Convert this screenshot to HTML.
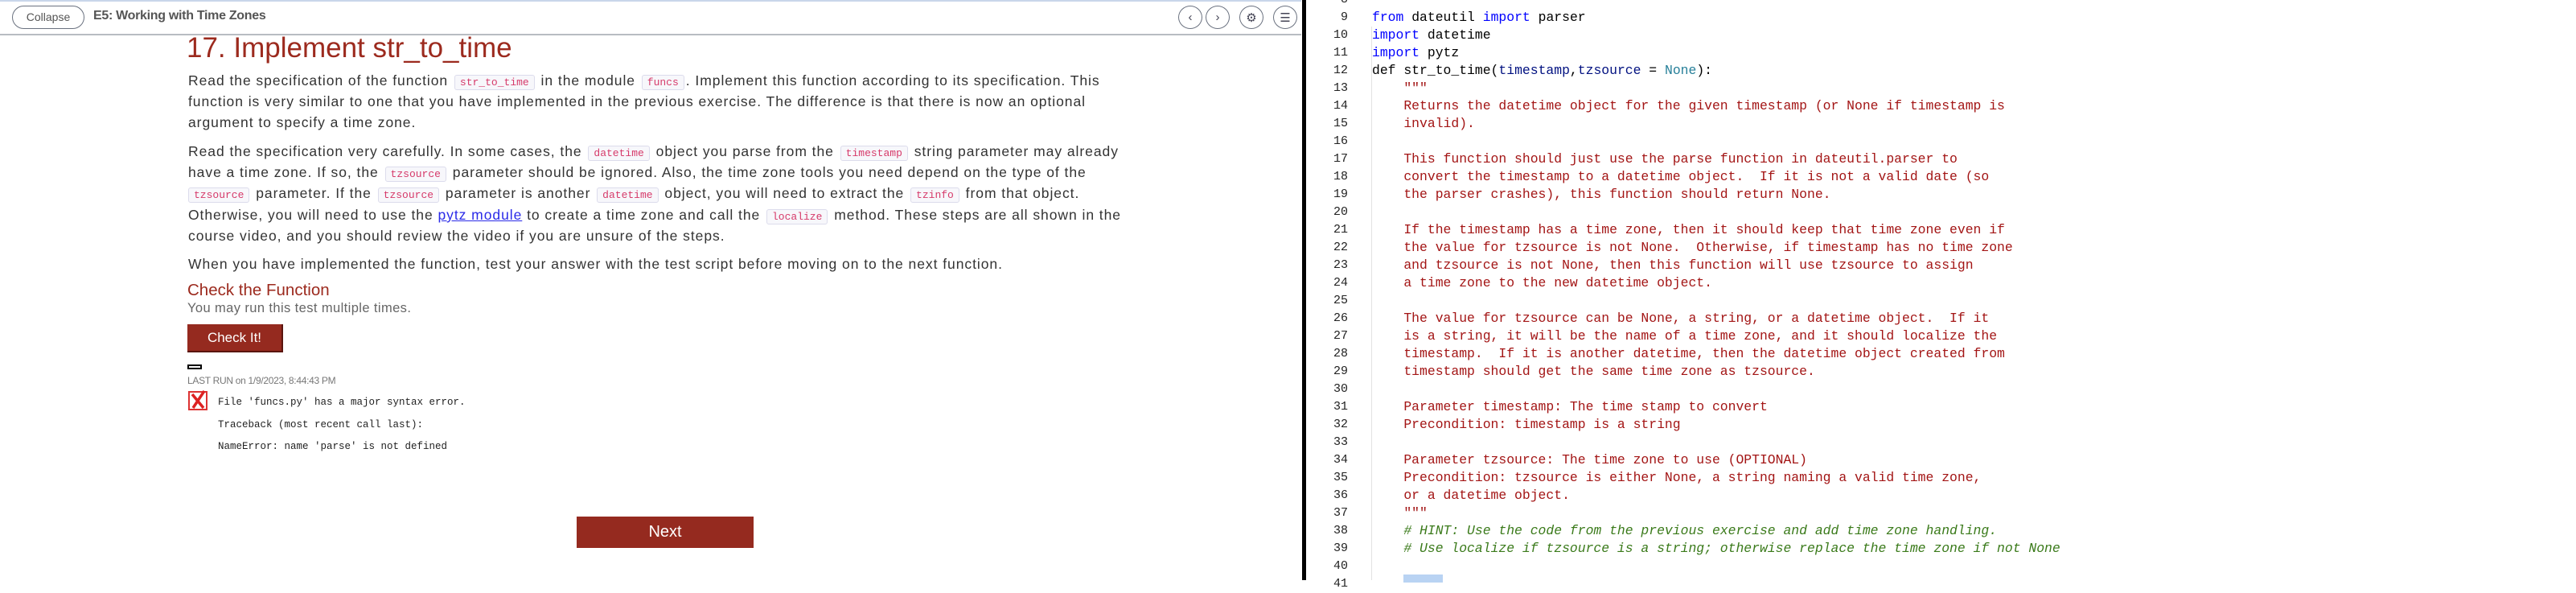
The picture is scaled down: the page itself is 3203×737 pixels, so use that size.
<!DOCTYPE html>
<html><head><meta charset="utf-8"><style>
*{margin:0;padding:0;box-sizing:border-box}
body{width:3203px;height:721px;overflow:hidden;background:#fff;position:relative;font-family:"Liberation Sans",sans-serif;color:#333}
.a{position:absolute;white-space:nowrap}
.p{font-size:17.5px;letter-spacing:0.95px;color:#333;line-height:26px}
code{font-family:"Liberation Mono",monospace;font-size:13px;letter-spacing:0;color:#d63a6a;background:#f7f7fb;border:1px solid #dcdcec;border-radius:3px;padding:1px 6px;margin:0 2px}
.circ{position:absolute;top:7px;width:30px;height:29px;border:1.5px solid #6b7280;border-radius:50%;display:flex;align-items:center;justify-content:center;color:#445;font-size:15px}
.ln{position:absolute;left:1630px;width:46px;text-align:right;font-family:"Liberation Mono",monospace;font-size:15px;color:#222;height:22px;line-height:22px}
.cd{position:absolute;left:1706px;font-family:"Liberation Mono",monospace;font-size:16.4px;height:22px;line-height:22px;white-space:pre;color:#000}
.s{color:#a31515}.k{color:#0000ff}.v{color:#001080}.n{color:#267f99}.c{color:#3a7a1a;font-style:italic}
</style></head><body>
<div class="a" style="left:0;top:0;width:1618px;height:2px;background:#c9d6ea"></div>
<div class="a" style="left:0;top:42px;width:1618px;height:2px;background:#b8bcc2"></div>
<div class="a" style="left:15px;top:7px;width:90px;height:29px;border:1.5px solid #6b7280;border-radius:15px;font-size:14px;color:#555;text-align:center;line-height:26px">Collapse</div>
<div class="a" style="left:116px;top:11px;font-size:16px;font-weight:bold;color:#555;letter-spacing:-0.3px">E5: Working with Time Zones</div>
<div class="circ" style="left:1465px">&#8249;</div>
<div class="circ" style="left:1499px">&#8250;</div>
<div class="circ" style="left:1541px">&#9881;</div>
<div class="circ" style="left:1583px">&#9776;</div>
<div class="a" style="left:1619px;top:0;width:5px;height:721px;background:#000"></div>

<div class="a" style="left:232px;top:42px;font-size:35px;color:#9c2a1e;line-height:36px">17. Implement str_to_time</div>
<div class="a p" style="left:234px;top:87px">Read the specification of the function <code>str_to_time</code> in the module <code>funcs</code>. Implement this function according to its specification. This</div>
<div class="a p" style="left:234px;top:113px">function is very similar to one that you have implemented in the previous exercise. The difference is that there is now an optional</div>
<div class="a p" style="left:234px;top:139px">argument to specify a time zone.</div>
<div class="a p" style="left:234px;top:175px">Read the specification very carefully. In some cases, the <code>datetime</code> object you parse from the <code>timestamp</code> string parameter may already</div>
<div class="a p" style="left:234px;top:201px">have a time zone. If so, the <code>tzsource</code> parameter should be ignored. Also, the time zone tools you need depend on the type of the</div>
<div class="a p" style="left:234px;top:227px"><code style="margin-left:0">tzsource</code> parameter. If the <code>tzsource</code> parameter is another <code>datetime</code> object, you will need to extract the <code>tzinfo</code> from that object.</div>
<div class="a p" style="left:234px;top:254px">Otherwise, you will need to use the <span style="color:#2a2ae8;text-decoration:underline">pytz module</span> to create a time zone and call the <code>localize</code> method. These steps are all shown in the</div>
<div class="a p" style="left:234px;top:280px">course video, and you should review the video if you are unsure of the steps.</div>
<div class="a p" style="left:234px;top:315px">When you have implemented the function, test your answer with the test script before moving on to the next function.</div>
<div class="a" style="left:233px;top:349px;font-size:20.5px;color:#9c2a1e">Check the Function</div>
<div class="a" style="left:233px;top:374px;font-size:16.5px;letter-spacing:0.4px;color:#666">You may run this test multiple times.</div>
<div class="a" style="left:233px;top:403px;width:119px;height:35px;background:#952a1f;border-right:2px solid #5a150f;border-bottom:2px solid #5a150f;color:#fff;font-size:17px;text-align:center;line-height:33px">Check It!</div>
<div class="a" style="left:233px;top:453px;width:18px;height:6px;border:2px solid #000;background:#fff"></div>
<div class="a" style="left:233px;top:466px;font-size:12px;color:#777;letter-spacing:-0.3px">LAST RUN on 1/9/2023, 8:44:43 PM</div>
<svg class="a" style="left:234px;top:484px" width="28" height="26" viewBox="0 0 28 26"><rect x="1" y="3" width="22" height="22" fill="#fff" stroke="#d33" stroke-width="2"/><path d="M5 6 L19 23 M20 2 L6 23" stroke="#d22" stroke-width="3.5"/></svg>
<div class="a" style="left:271px;top:493px;font-family:'Liberation Mono',monospace;font-size:12.5px;color:#222">File 'funcs.py' has a major syntax error.</div>
<div class="a" style="left:271px;top:521px;font-family:'Liberation Mono',monospace;font-size:12.5px;color:#222">Traceback (most recent call last):</div>
<div class="a" style="left:271px;top:548px;font-family:'Liberation Mono',monospace;font-size:12.5px;color:#222">NameError: name 'parse' is not defined</div>
<div class="a" style="left:717px;top:642px;width:220px;height:39px;background:#952a1f;color:#fff;font-size:20px;text-align:center;line-height:39px">Next</div>

<div class="a" style="left:1705px;top:33px;width:1px;height:688px;background:#e2e2e2"></div>
<div class="a" style="left:1745px;top:714px;width:49px;height:10px;background:#b9d3f3"></div>

<div class="ln" style="top:-11px">8</div>
<div class="ln" style="top:11px">9</div><div class="cd" style="top:11px"><span class="k">from</span> dateutil <span class="k">import</span> parser</div>
<div class="ln" style="top:33px">10</div><div class="cd" style="top:33px"><span class="k">import</span> datetime</div>
<div class="ln" style="top:55px">11</div><div class="cd" style="top:55px"><span class="k">import</span> pytz</div>
<div class="ln" style="top:77px">12</div><div class="cd" style="top:77px">def str_to_time(<span class="v">timestamp</span>,<span class="v">tzsource</span> = <span class="n">None</span>):</div>
<div class="ln" style="top:99px">13</div><div class="cd s" style="top:99px">    """</div>
<div class="ln" style="top:121px">14</div><div class="cd s" style="top:121px">    Returns the datetime object for the given timestamp (or None if timestamp is</div>
<div class="ln" style="top:143px">15</div><div class="cd s" style="top:143px">    invalid).</div>
<div class="ln" style="top:165px">16</div>
<div class="ln" style="top:187px">17</div><div class="cd s" style="top:187px">    This function should just use the parse function in dateutil.parser to</div>
<div class="ln" style="top:209px">18</div><div class="cd s" style="top:209px">    convert the timestamp to a datetime object.  If it is not a valid date (so</div>
<div class="ln" style="top:231px">19</div><div class="cd s" style="top:231px">    the parser crashes), this function should return None.</div>
<div class="ln" style="top:253px">20</div>
<div class="ln" style="top:275px">21</div><div class="cd s" style="top:275px">    If the timestamp has a time zone, then it should keep that time zone even if</div>
<div class="ln" style="top:297px">22</div><div class="cd s" style="top:297px">    the value for tzsource is not None.  Otherwise, if timestamp has no time zone</div>
<div class="ln" style="top:319px">23</div><div class="cd s" style="top:319px">    and tzsource is not None, then this function will use tzsource to assign</div>
<div class="ln" style="top:341px">24</div><div class="cd s" style="top:341px">    a time zone to the new datetime object.</div>
<div class="ln" style="top:363px">25</div>
<div class="ln" style="top:385px">26</div><div class="cd s" style="top:385px">    The value for tzsource can be None, a string, or a datetime object.  If it</div>
<div class="ln" style="top:407px">27</div><div class="cd s" style="top:407px">    is a string, it will be the name of a time zone, and it should localize the</div>
<div class="ln" style="top:429px">28</div><div class="cd s" style="top:429px">    timestamp.  If it is another datetime, then the datetime object created from</div>
<div class="ln" style="top:451px">29</div><div class="cd s" style="top:451px">    timestamp should get the same time zone as tzsource.</div>
<div class="ln" style="top:473px">30</div>
<div class="ln" style="top:495px">31</div><div class="cd s" style="top:495px">    Parameter timestamp: The time stamp to convert</div>
<div class="ln" style="top:517px">32</div><div class="cd s" style="top:517px">    Precondition: timestamp is a string</div>
<div class="ln" style="top:539px">33</div>
<div class="ln" style="top:561px">34</div><div class="cd s" style="top:561px">    Parameter tzsource: The time zone to use (OPTIONAL)</div>
<div class="ln" style="top:583px">35</div><div class="cd s" style="top:583px">    Precondition: tzsource is either None, a string naming a valid time zone,</div>
<div class="ln" style="top:605px">36</div><div class="cd s" style="top:605px">    or a datetime object.</div>
<div class="ln" style="top:627px">37</div><div class="cd s" style="top:627px">    """</div>
<div class="ln" style="top:649px">38</div><div class="cd c" style="top:649px">    # HINT: Use the code from the previous exercise and add time zone handling.</div>
<div class="ln" style="top:671px">39</div><div class="cd c" style="top:671px">    # Use localize if tzsource is a string; otherwise replace the time zone if not None</div>
<div class="ln" style="top:693px">40</div>
<div class="ln" style="top:715px">41</div>
</body></html>
